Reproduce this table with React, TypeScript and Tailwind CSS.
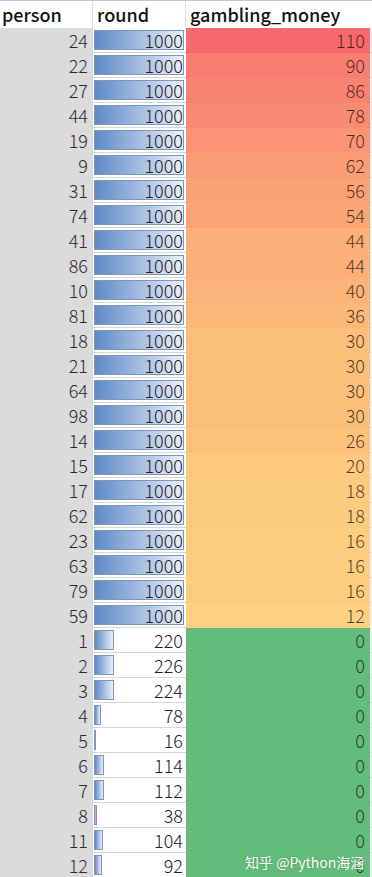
import React from 'react';

type Row = { person: number; round: number; money: number };

const rows: Row[] = [
  { person: 24, round: 1000, money: 110 },
  { person: 22, round: 1000, money: 90 },
  { person: 27, round: 1000, money: 86 },
  { person: 44, round: 1000, money: 78 },
  { person: 19, round: 1000, money: 70 },
  { person: 9, round: 1000, money: 62 },
  { person: 31, round: 1000, money: 56 },
  { person: 74, round: 1000, money: 54 },
  { person: 41, round: 1000, money: 44 },
  { person: 86, round: 1000, money: 44 },
  { person: 10, round: 1000, money: 40 },
  { person: 81, round: 1000, money: 36 },
  { person: 18, round: 1000, money: 30 },
  { person: 21, round: 1000, money: 30 },
  { person: 64, round: 1000, money: 30 },
  { person: 98, round: 1000, money: 30 },
  { person: 14, round: 1000, money: 26 },
  { person: 15, round: 1000, money: 20 },
  { person: 17, round: 1000, money: 18 },
  { person: 62, round: 1000, money: 18 },
  { person: 23, round: 1000, money: 16 },
  { person: 63, round: 1000, money: 16 },
  { person: 79, round: 1000, money: 16 },
  { person: 59, round: 1000, money: 12 },
  { person: 1, round: 220, money: 0 },
  { person: 2, round: 226, money: 0 },
  { person: 3, round: 224, money: 0 },
  { person: 4, round: 78, money: 0 },
  { person: 5, round: 16, money: 0 },
  { person: 6, round: 114, money: 0 },
  { person: 7, round: 112, money: 0 },
  { person: 8, round: 38, money: 0 },
  { person: 11, round: 104, money: 0 },
  { person: 12, round: 92, money: 0 },
];

const MAX_MONEY = 110;
const BAR_MAX = 90;

// red -> yellow scale, zero gets the green
function moneyColor(v: number) {
  if (v === 0) return '#63bc7c';
  const t = v / MAX_MONEY;
  const r = Math.round(254 + (247 - 254) * t);
  const g = Math.round(222 + (105 - 222) * t);
  const b = Math.round(129 + (108 - 129) * t);
  return `rgb(${r},${g},${b})`;
}

export default function App() {
  return (
    <div
      className="relative w-[372px] h-[877px] overflow-hidden bg-[#e6e6e6]"
      style={{ fontFamily: '"Noto Sans CJK SC", "Noto Sans", sans-serif' }}
    >
      {/* header */}
      <div className="flex h-[28px] bg-white border-t border-[#c6c6c6]">
        <div className="w-[93px] pl-[2px] text-[18px] leading-[26px] font-medium text-[#111] border-r border-[#e2e2e2]">person</div>
        <div className="w-[93px] pl-[4px] text-[18px] leading-[26px] font-medium text-[#111] border-r border-[#e2e2e2]">round</div>
        <div className="w-[184px] pl-[4px] text-[18px] leading-[26px] font-medium text-[#111]">gambling_money</div>
        <div className="flex-1 bg-white" />
      </div>

      {rows.map((r) => (
        <div key={r.person} className="flex h-[25px] font-light">
          <div className="w-[93px] bg-[#dbdbdb] text-right pr-[5px] text-[18px] leading-[25px] text-[#2b2b2b]">
            {r.person}
          </div>
          <div className="relative w-[93px] bg-white border-b border-[#d6d6d6] text-right pr-[3px] text-[18px] leading-[24px] text-[#222]">
            <div
              className="absolute left-[1px] top-[2px] h-[20px] border border-[#7f95b9] bg-gradient-to-r from-[#5f89c6] to-[#eaf0f9]"
              style={{ width: Math.max(2, Math.round((r.round / 1000) * BAR_MAX)) }}
            />
            <span className="relative">{r.round}</span>
          </div>
          <div
            className="w-[184px] text-right pr-[5px] text-[18px] leading-[25px] text-black/70"
            style={{ backgroundColor: moneyColor(r.money) }}
          >
            {r.money}
          </div>
          <div className="flex-1 bg-[#f2f2f2] border-b border-[#dadada]" />
        </div>
      ))}

      <div className="absolute left-[245px] top-[852px] whitespace-nowrap text-[14px] leading-[20px] text-white [text-shadow:0_0_2px_rgba(0,0,0,0.25)]">
        知乎 @Python海涵
      </div>
    </div>
  );
}
